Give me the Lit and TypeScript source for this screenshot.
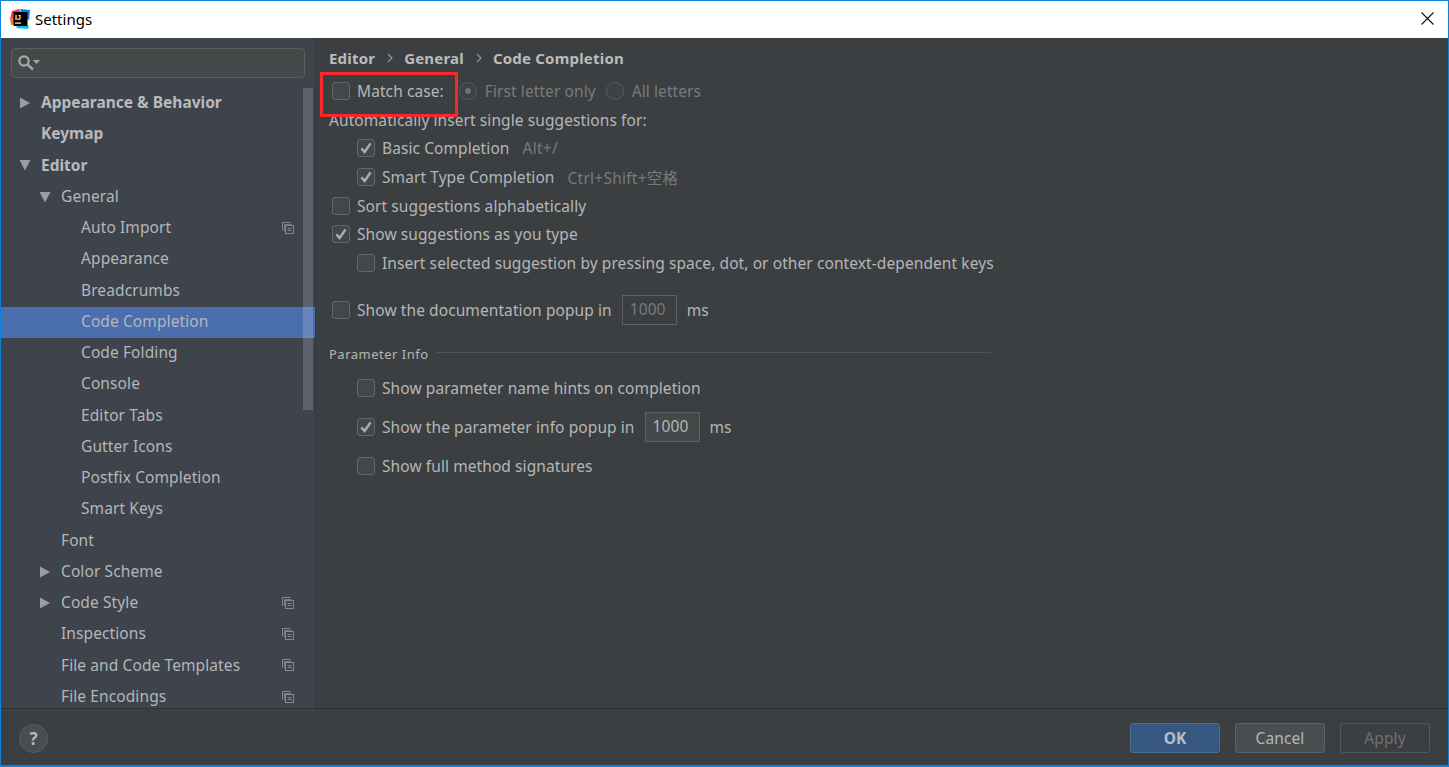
import { LitElement, html, css, svg } from "lit";
import { customElement } from "lit/decorators.js";

type Node = { t: string; lvl: number; arrow?: "r" | "d"; bold?: boolean; sel?: boolean; copy?: boolean };
const TREE: Node[] = [
  { t: "Appearance & Behavior", lvl: 0, arrow: "r", bold: true },
  { t: "Keymap", lvl: 0, bold: true },
  { t: "Editor", lvl: 0, arrow: "d", bold: true },
  { t: "General", lvl: 1, arrow: "d" },
  { t: "Auto Import", lvl: 2, copy: true },
  { t: "Appearance", lvl: 2 },
  { t: "Breadcrumbs", lvl: 2 },
  { t: "Code Completion", lvl: 2, sel: true },
  { t: "Code Folding", lvl: 2 },
  { t: "Console", lvl: 2 },
  { t: "Editor Tabs", lvl: 2 },
  { t: "Gutter Icons", lvl: 2 },
  { t: "Postfix Completion", lvl: 2 },
  { t: "Smart Keys", lvl: 2 },
  { t: "Font", lvl: 1 },
  { t: "Color Scheme", lvl: 1, arrow: "r" },
  { t: "Code Style", lvl: 1, arrow: "r", copy: true },
  { t: "Inspections", lvl: 1, copy: true },
  { t: "File and Code Templates", lvl: 1, copy: true },
  { t: "File Encodings", lvl: 1, copy: true },
];

const lvlClass = ["l0", "l1", "l2"];

@customElement("app-root")
export class AppRoot extends LitElement {
  static styles = css`
    :host {
      display: block;
      width: 1449px;
      height: 767px;
      font-family: "Noto Sans", "Noto Sans CJK SC", sans-serif;
      font-size: 15.5px;
      letter-spacing: 0.085px;
      color: #bbbbbb;
    }
    * { box-sizing: border-box; }
    .win {
      position: relative;
      width: 1449px;
      height: 767px;
      border: 1px solid #0e82d9;
      border-bottom-width: 2px;
      display: flex;
      flex-direction: column;
      background: #3c3f41;
      overflow: hidden;
    }
    .title {
      height: 37px;
      flex: none;
      background: #fff;
      color: #000;
      display: flex;
      align-items: center;
      padding: 0 10px 2px 9px;
      gap: 5px;
      font-size: 15px;
      letter-spacing: 0;
    }
    .title .logo { width: 20px; height: 20px; flex: none; margin-top: 1px; }
    .title .name { flex: 1; }
    .title .x { width: 13px; height: 13px; margin-right: 4px; }
    .main { flex: 1; display: flex; min-height: 0; }
    .side {
      width: 315px;
      flex: none;
      background: #3e434c;
      border-right: 1px solid #353739;
      position: relative;
      padding-top: 10px;
      overflow: hidden;
    }
    .search {
      margin-left: 10px;
      width: 294px;
      height: 30px;
      background: #45494a;
      border: 1px solid #5a5d5e;
      border-radius: 4px;
      display: flex;
      align-items: center;
      padding-left: 5px;
    }
    .search svg { width: 24px; height: 20px; }
    .tree { margin-top: 9.75px; }
    .row {
      height: 31.25px;
      display: flex;
      align-items: center;
      position: relative;
      white-space: nowrap;
      line-height: 20px;
      color: #b4b6b8;
      padding-bottom: 2.5px;
      letter-spacing: 0.1px;
    }
    .row.sel { background: #4b6eaf; }
    .row.b { font-weight: 700; letter-spacing: 0; color: #b8babc; }
    .l0 { padding-left: 40px; }
    .l1 { padding-left: 60px; }
    .l2 { padding-left: 80px; }
    .arrow { position: absolute; top: 9px; width: 12px; height: 12px; }
    .l0 .arrow { left: 18px; }
    .l1 .arrow { left: 38px; }
    .copy { position: absolute; left: 281px; top: 9px; width: 12px; height: 12px; }
    .thumb {
      position: absolute;
      left: 302px;
      top: 50px;
      width: 10px;
      height: 322px;
      background: rgba(255, 255, 255, 0.17);
    }
    .content { flex: 1; padding: 8px 0 0 13px; min-width: 0; position: relative; }
    .crumbs {
      height: 24px;
      display: flex;
      align-items: center;
      font-weight: 700;
      font-size: 15px;
      letter-spacing: 0.2px;
      color: #bbbbbb;
    }
    .crumbs svg { width: 6px; height: 10px; margin: 0 11px 0 12px; }
    .rows { margin-top: 6.7px; }
    .r {
      height: 28.7px;
      display: flex;
      align-items: center;
      white-space: nowrap;
      color: #b4b6b8;
    }
    .r.ind { padding-left: 28px; }
    .r.base { padding-left: 3px; }
    .r .lab { margin-left: 7px; }
    .dis { color: #777a7c; }
    .hint { color: #777a7c; margin-left: 13px; font-size: 15.5px; letter-spacing: 0.25px; }
    .cb {
      width: 18px;
      height: 18px;
      flex: none;
      background: #43474a;
      border: 1px solid #646668;
      border-radius: 3px;
      display: block;
    }
    .cb svg { display: block; width: 16px; height: 16px; }
    .radio {
      width: 18px;
      height: 18px;
      border-radius: 50%;
      border: 1px solid #595b5d;
      background: #3f4244;
      display: flex;
      align-items: center;
      justify-content: center;
      flex: none;
    }
    .radio i { width: 6px; height: 6px; border-radius: 50%; background: #6f7173; display: block; }
    .first { margin-left: 15px; }
    .first + .dis { margin-left: 8px; }
    .second { margin-left: 10px; }
    .second + .dis { margin-left: 8px; }
    .numrow { height: 30px; margin-top: 17.4px; }
    .num {
      width: 55px;
      height: 30px;
      border: 1px solid #5e6060;
      background: #45494a;
      margin-left: 10px;
      padding-left: 7px;
      line-height: 27px;
    }
    .num.off { background: #3c3f41; color: #777a7c; }
    .ms { margin-left: 10px; }
    .sect {
      margin-top: 14px;
      height: 30px;
      display: flex;
      align-items: center;
      font-size: 13px;
      letter-spacing: 0.5px;
      color: #b4b6b8;
      width: 662px;
    }
    .sect hr {
      flex: 1;
      border: 0;
      border-top: 1px solid #505254;
      margin: 0 0 2px 7px;
    }
    .p1 { height: 39px; margin-top: -0.5px; }
    .p2 { height: 39px; }
    .box {
      position: absolute;
      left: 319px;
      top: 71px;
      width: 138px;
      height: 45px;
      border: 3px solid #f8282c;
      pointer-events: none;
    }
    .foot {
      height: 57px;
      flex: none;
      border-top: 1px solid #2f3133;
      display: flex;
      align-items: center;
      padding: 2px 18px 0 18px;
      gap: 15px;
    }
    .help {
      width: 29px;
      height: 29px;
      border-radius: 50%;
      background: #4a4d4f;
      border: 1px solid #5a5d5e;
      color: #b4b6b8;
      font-weight: 700;
      font-size: 17px;
      display: flex;
      align-items: center;
      justify-content: center;
      margin-right: auto;
    }
    .btn {
      width: 90px;
      height: 30px;
      border-radius: 3px;
      border: 1px solid #5f6365;
      background: #4a4e50;
      color: #b4b6b8;
      display: flex;
      align-items: center;
      justify-content: center;
    }
    .btn.ok { background: #365880; border-color: #4c708c; font-weight: 700; color: #b9bec4; }
    .btn.off { background: #3c3f41; border-color: #555759; color: #6f7173; }
  `;

  private cb(on = false) {
    return html`<span class="cb">${on
      ? svg`<svg viewBox="0 0 16 16"><path d="M3.4 8.4 6.6 12 12.6 3.4" fill="none" stroke="#acacac" stroke-width="2.5"/></svg>`
      : ""}</span>`;
  }

  private copyIcon() {
    return html`<svg class="copy" viewBox="0 0 12 12" fill="none" stroke="#7f8b91">
      <path d="M.5 8.5v-8h8"/><path d="M2.5 9.5v-7h7" opacity=".8"/>
      <rect x="3.5" y="3.5" width="8" height="8" fill="#3e434c"/>
      <path d="M5.5 6.5h4M5.5 8.5h4"/>
    </svg>`;
  }

  private arrow(a: "r" | "d") {
    return a === "r"
      ? html`<svg class="arrow" viewBox="0 0 12 12"><path d="M1 .5 11 6 1 11.5z" fill="#9a9c9e"/></svg>`
      : html`<svg class="arrow" viewBox="0 0 12 12"><path d="M.5 1h11L6 11.5z" fill="#9a9c9e"/></svg>`;
  }

  render() {
    const chev = html`<svg viewBox="0 0 6 10"><path d="M1 1l4 4-4 4" fill="none" stroke="#9a9c9e" stroke-width="1.1"/></svg>`;
    return html`<div class="win">
      <div class="title">
        <svg class="logo" viewBox="0 0 20 20">
          <path d="M2 2 9 0l3 6-9 9-3-5z" fill="#fe315d"/>
          <path d="M0 8l4 1-1 7-2 0z" fill="#f97a12"/>
          <path d="M10 0l10 1-1 10-6-3z" fill="#087cfa"/>
          <path d="M6 19l3-6 10 4-1 3z" fill="#07c3f2"/>
          <rect x="3.5" y="3" width="14" height="14" fill="#000"/>
          <text x="5" y="10.5" font-size="7" font-weight="700" font-family="Liberation Sans" fill="#fff">IJ</text>
          <rect x="5" y="13.5" width="6" height="1.2" fill="#fff"/>
        </svg>
        <span class="name">Settings</span>
        <svg class="x" viewBox="0 0 13 13"><path d="M.5.5l12 12M12.5.5l-12 12" stroke="#111" stroke-width="1.1" fill="none"/></svg>
      </div>
      <div class="main">
        <div class="side">
          <div class="search">
            <svg viewBox="0 0 24 20">
              <circle cx="7" cy="8" r="4.7" fill="none" stroke="#a8a8a8" stroke-width="2.2"/>
              <path d="M10.5 11.5l5.5 5" stroke="#a8a8a8" stroke-width="2.4"/>
              <path d="M16 7h7l-3.5 4z" fill="#a8a8a8"/>
            </svg>
          </div>
          <div class="tree">
            ${TREE.map(
              (n) => html`<div class="row ${lvlClass[n.lvl]} ${n.bold ? "b" : ""} ${n.sel ? "sel" : ""}">
                ${n.arrow ? this.arrow(n.arrow) : ""}<span>${n.t}</span>${n.copy ? this.copyIcon() : ""}
              </div>`
            )}
          </div>
          <div class="thumb"></div>
        </div>
        <div class="content">
          <div class="crumbs"><span>Editor</span>${chev}<span>General</span>${chev}<span>Code Completion</span></div>
          <div class="rows">
            <div class="r base">${this.cb()}<span class="lab">Match case:</span>
              <span class="radio first"><i></i></span><span class="dis">First letter only</span>
              <span class="radio second"></span><span class="dis">All letters</span>
            </div>
            <div class="r">Automatically insert single suggestions for:</div>
            <div class="r ind">${this.cb(true)}<span class="lab">Basic Completion</span><span class="hint">Alt+/</span></div>
            <div class="r ind">${this.cb(true)}<span class="lab">Smart Type Completion</span><span class="hint">Ctrl+Shift+空格</span></div>
            <div class="r base">${this.cb()}<span class="lab">Sort suggestions alphabetically</span></div>
            <div class="r base">${this.cb(true)}<span class="lab">Show suggestions as you type</span></div>
            <div class="r ind">${this.cb()}<span class="lab">Insert selected suggestion by pressing space, dot, or other context-dependent keys</span></div>
            <div class="r base numrow">${this.cb()}<span class="lab">Show the documentation popup in</span><span class="num off">1000</span><span class="ms">ms</span></div>
            <div class="sect"><span>Parameter Info</span><hr /></div>
            <div class="r ind p1">${this.cb()}<span class="lab">Show parameter name hints on completion</span></div>
            <div class="r ind p2">${this.cb(true)}<span class="lab">Show the parameter info popup in</span><span class="num">1000</span><span class="ms">ms</span></div>
            <div class="r ind p2">${this.cb()}<span class="lab">Show full method signatures</span></div>
          </div>
        </div>
      </div>
      <div class="foot">
        <div class="help">?</div>
        <div class="btn ok">OK</div>
        <div class="btn">Cancel</div>
        <div class="btn off">Apply</div>
      </div>
      <div class="box"></div>
    </div>`;
  }
}
